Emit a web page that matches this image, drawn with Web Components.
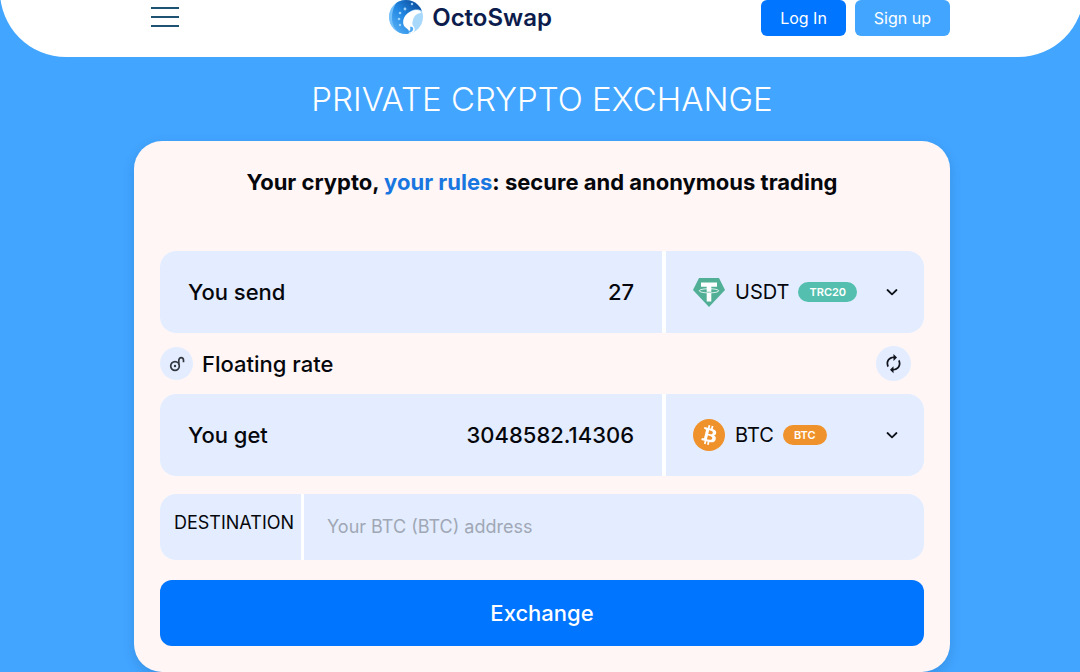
<!DOCTYPE html>
<html lang="en">
<head>
<meta charset="utf-8">
<meta name="viewport" content="width=device-width, initial-scale=1">
<title>OctoSwap</title>
<style>
  body {
    margin: 0;
    background: #42a5ff;
    font-family: Inter, "Liberation Sans", sans-serif;
    color: #06070c;
    overflow: hidden;
  }
</style>
</head>
<body>
<octo-page></octo-page>

<script>
(function () {
  'use strict';

  const define = (name, html, setup) => {
    const template = document.createElement('template');
    template.innerHTML = html;
    customElements.define(name, class extends HTMLElement {
      connectedCallback() {
        if (this.shadowRoot) return;
        const root = this.attachShadow({ mode: 'open' });
        root.appendChild(template.content.cloneNode(true));
        if (setup) setup(this, root);
      }
    });
  };

  const ICONS = {
    logo: `<svg viewBox="0 0 36 36"><defs><linearGradient id="g" x1="0" y1="1" x2="1" y2="0"><stop offset="0" stop-color="#5fb6f8"/><stop offset=".45" stop-color="#2187e2"/><stop offset="1" stop-color="#073a86"/></linearGradient><clipPath id="c"><circle cx="18" cy="18" r="17"/></clipPath></defs>
      <g clip-path="url(#c)"><rect width="36" height="36" fill="#a8d8fa"/>
      <path d="M0 0h16C8 5 5 12 6 21c1 7 4 11 9 15H0z" fill="#74c0fb"/>
      <path d="M12 0h18l6 13c-4-3-9-3-13-1-6 3-9 8-7 14 1 3 5 4 5 7 0 2-2 3-5 3C8 33 4 27 4 19 4 11 7 4 12 0z" fill="url(#g)"/>
      <path d="M16 27c-3-7 3-15 12-16 3 0 5 1 5 3-4 0-7 3-8 7-1 3-1 5 1 7 2 3 0 7-5 7 2-4-2-5-5-8z" fill="#fff"/>
      <path d="M22 28c2-1 4 1 3 3s-3 3-5 2c2-1 3-3 2-5z" fill="#4ea9f2"/>
      <g fill="#9bd2fb"><circle cx="24" cy="5" r="1.2"/><circle cx="17" cy="10" r="1.4"/><circle cx="12" cy="14" r="1.3"/><circle cx="11" cy="20" r="1.3"/><circle cx="12" cy="26" r="1.2"/></g></g></svg>`,
    lock: `<svg viewBox="0 0 16 16" fill="none" stroke="#33373f" stroke-width="1.7"><circle cx="6" cy="10" r="4.3"/><circle cx="6" cy="10" r="1.2" fill="#33373f" stroke="none"/><path d="M9.8 8.500V4.300c0-3.600 4.700-3.600 4.700 0v2"/></svg>`,
    refresh: `<svg viewBox="0 0 24 24" fill="#10131c"><path d="M12 6v3l4-4-4-4v3c-4.42 0-8 3.58-8 8 0 1.57.46 3.03 1.24 4.26L6.7 14.8A5.87 5.87 0 0 1 6 12c0-3.31 2.69-6 6-6zm6.76 1.74L17.3 9.2c.44.84.7 1.79.7 2.8 0 3.31-2.69 6-6 6v-3l-4 4 4 4v-3c4.42 0 8-3.58 8-8 0-1.57-.46-3.03-1.24-4.26z"/></svg>`,
    chevron: `<svg viewBox="0 0 12 12" fill="none" stroke="#10131c" stroke-width="1.8" stroke-linecap="round" stroke-linejoin="round"><path d="M1.500 4 6 8.300 10.500 4"/></svg>`,
    usdt: `<svg viewBox="0 0 34 34"><path d="M7 3h20l6 12L17 32 1 15z" fill="#50af95"/><path d="M9 7.500h16v4.300H9zM14.700 10h4.600v16.500h-4.600z" fill="#fff"/><ellipse cx="17" cy="15.800" rx="9.800" ry="2.100" fill="none" stroke="#fff" stroke-width=".8"/><path d="M14.700 17.200c1.500.1 3.100.1 4.600 0" fill="none" stroke="#50af95" stroke-width=".7"/></svg>`,
    btc: `<svg viewBox="-1 -1 34 34"><circle cx="16" cy="16" r="16" fill="#f0922b"/><path fill="#fff" d="M23.189 14.020c.314-2.096-1.283-3.223-3.465-3.975l.708-2.840-1.728-.43-.69 2.765c-.454-.114-.920-.220-1.385-.326l.695-2.783L15.596 6l-.708 2.839c-.376-.086-.746-.170-1.104-.260l.002-.009-2.384-.595-.460 1.846s1.283.294 1.256.312c.7.175.826.638.805 1.006l-.806 3.235c.048.012.110.030.180.057l-.183-.045-1.130 4.532c-.086.212-.303.531-.793.410.018.025-1.256-.313-1.256-.313l-.858 1.978 2.250.561c.418.105.828.215 1.231.318l-.715 2.872 1.727.430.708-2.840c.472.127.930.245 1.378.357l-.706 2.828 1.728.430.715-2.866c2.948.558 5.164.333 6.097-2.333.752-2.146-.037-3.385-1.588-4.192 1.130-.260 1.980-1.003 2.207-2.538zm-3.950 5.538c-.533 2.147-4.148.986-5.320.695l.950-3.805c1.172.293 4.929.872 4.370 3.110zm.535-5.569c-.487 1.953-3.495.960-4.470.717l.860-3.450c.975.243 4.118.696 3.610 2.733z"/></svg>`
  };

  define('octo-icon', `
    <style>
      :host { display: block; flex: none; width: var(--icon-size, 16px); height: var(--icon-size, 16px); }
      span, svg { display: block; width: 100%; height: 100%; }
    </style>
    <span></span>`,
    (host, root) => {
      root.querySelector('span').innerHTML = ICONS[host.getAttribute('name')] || '';
    });

  define('octo-button', `
    <style>
      :host { display: block; }
      button {
        width: 100%;
        height: 36px;
        padding: 0 19px;
        border: 0;
        border-radius: 6px;
        background: #0075ff;
        color: #fff;
        font: 400 16px/20px Inter, sans-serif;
        cursor: pointer;
      }
      :host([kind="light"]) button { background: #42a5ff; }
      :host([kind="large"]) button { height: 66px; border-radius: 12px; font-size: 22px; font-weight: 500; }
    </style>
    <button type="button"><slot></slot></button>`);

  define('octo-header', `
    <style>
      :host { display: block; background: #fff; border-radius: 0 0 66px 66px; margin-top: -9px; padding-top: 9px; }
      .bar {
        display: flex;
        justify-content: space-between;
        align-items: flex-start;
        max-width: 816px;
        height: 57px;
        margin: 0 auto;
      }
      .menu {
        display: flex;
        flex-direction: column;
        gap: 7px;
        width: 28px;
        margin: 7px 0 0 17px;
        padding: 0;
        border: 0;
        background: none;
        cursor: pointer;
      }
      .menu i { height: 2px; background: #1d5273; }
      a {
        display: flex;
        align-items: center;
        gap: 8px;
        height: 34px;
        color: #0c1c4c;
        font-size: 24px;
        font-weight: 600;
        text-decoration: none;
        --icon-size: 36px;
      }
      nav { display: flex; gap: 9px; }
    </style>
    <div class="bar">
      <button class="menu" type="button" aria-label="Menu"><i></i><i></i><i></i></button>
      <a href="#"><octo-icon name="logo"></octo-icon>OctoSwap</a>
      <nav>
        <octo-button>Log In</octo-button>
        <octo-button kind="light">Sign up</octo-button>
      </nav>
    </div>`);

  define('coin-picker', `
    <style>
      :host { display: block; }
      label { display: flex; align-items: center; height: 100%; padding: 0 26px; --icon-size: 34px; }
      select {
        appearance: none;
        field-sizing: content;
        margin: 0 9px;
        padding: 0;
        border: 0;
        background: none;
        color: inherit;
        font: 400 20px/24px Inter, sans-serif;
      }
      .badge {
        padding: 0 11px;
        border-radius: 10px;
        background: var(--badge-color);
        color: #fff;
        font-size: 11px;
        font-weight: 600;
        line-height: 20px;
      }
      .arrow { margin-left: auto; --icon-size: 12px; }
    </style>
    <label>
      <slot></slot>
      <select aria-label="Currency"><option></option></select>
      <span class="badge"></span>
      <octo-icon class="arrow" name="chevron"></octo-icon>
    </label>`,
    (host, root) => {
      root.querySelector('option').textContent = host.getAttribute('coin');
      root.querySelector('.badge').textContent = host.getAttribute('network');
    });

  define('amount-row', `
    <style>
      :host { display: grid; grid-template-columns: 1fr 258px; gap: 4px; height: 82px; border-radius: 16px; overflow: hidden; background: #fff; }
      .amount { display: flex; align-items: center; padding: 0 28px; background: #e3edff; font-size: 22px; font-weight: 500; }
      label { flex: none; }
      input {
        flex: 1;
        min-width: 0;
        padding: 0;
        border: 0;
        outline: 0;
        background: none;
        color: inherit;
        font: inherit;
        text-align: right;
      }
      ::slotted(*) { background: #e3edff; }
    </style>
    <div class="amount"><label for="amount"></label><input id="amount" inputmode="decimal"></div>
    <slot></slot>`,
    (host, root) => {
      root.querySelector('label').textContent = host.getAttribute('label');
      root.querySelector('input').value = host.getAttribute('value');
    });

  define('rate-bar', `
    <style>
      :host { display: flex; align-items: center; height: 61px; padding-right: 13px; font-size: 22px; font-weight: 500; }
      button {
        display: grid;
        place-items: center;
        width: 33px;
        height: 33px;
        padding: 0;
        border: 0;
        border-radius: 50%;
        background: #e3edff;
        cursor: pointer;
      }
      span { margin: 0 auto 0 9px; }
      .refresh { width: 35px; height: 35px; --icon-size: 21px; }
    </style>
    <button type="button" aria-label="Rate type"><octo-icon name="lock"></octo-icon></button>
    <span><slot></slot></span>
    <button class="refresh" type="button" aria-label="Refresh rate"><octo-icon name="refresh"></octo-icon></button>`);

  define('address-field', `
    <style>
      :host { display: grid; grid-template-columns: 141px 1fr; gap: 3px; height: 66px; border-radius: 16px; overflow: hidden; background: #fff; }
      label { padding: 17px 0 0 14px; background: #e3edff; font-size: 18px; line-height: 24px; }
      input {
        min-width: 0;
        padding: 0 23px;
        border: 0;
        outline: 0;
        background: #e3edff;
        color: inherit;
        font: 400 18px/24px Inter, sans-serif;
      }
      input::placeholder { color: #a0a7b5; opacity: 1; }
    </style>
    <label for="address"><slot></slot></label>
    <input id="address" type="text" placeholder="Your BTC (BTC) address">`);

  define('exchange-card', `
    <style>
      :host {
        display: block;
        box-sizing: border-box;
        max-width: 816px;
        margin: 0 auto;
        padding: 26px;
        border-radius: 28px;
        background: #fff6f5;
        box-shadow: 0 4px 12px rgba(20, 70, 130, .2);
      }
      h2 { margin: 0 0 54px; font-size: 22px; font-weight: 700; line-height: 30px; text-align: center; }
      h2 span { color: #1976e0; }
      address-field { margin: 18px 0 20px; }
    </style>
    <h2>Your crypto, <span>your rules</span>: secure and anonymous trading</h2>
    <amount-row label="You send" value="27">
      <coin-picker coin="USDT" network="TRC20" style="--badge-color: #54bfae"><octo-icon name="usdt"></octo-icon></coin-picker>
    </amount-row>
    <rate-bar>Floating rate</rate-bar>
    <amount-row label="You get" value="3048582.14306">
      <coin-picker coin="BTC" network="BTC" style="--badge-color: #f0922b"><octo-icon name="btc"></octo-icon></coin-picker>
    </amount-row>
    <address-field>DESTINATION</address-field>
    <octo-button kind="large">Exchange</octo-button>`);

  define('octo-page', `
    <style>
      :host { display: block; margin-right: -4px; }
      h1 { margin: 0; padding: 22px 0; color: #fff; font-size: 33px; font-weight: 300; line-height: 40px; text-align: center; }
    </style>
    <octo-header></octo-header>
    <main>
      <h1>PRIVATE CRYPTO EXCHANGE</h1>
      <exchange-card></exchange-card>
    </main>`);
})();
</script>
</body>
</html>
